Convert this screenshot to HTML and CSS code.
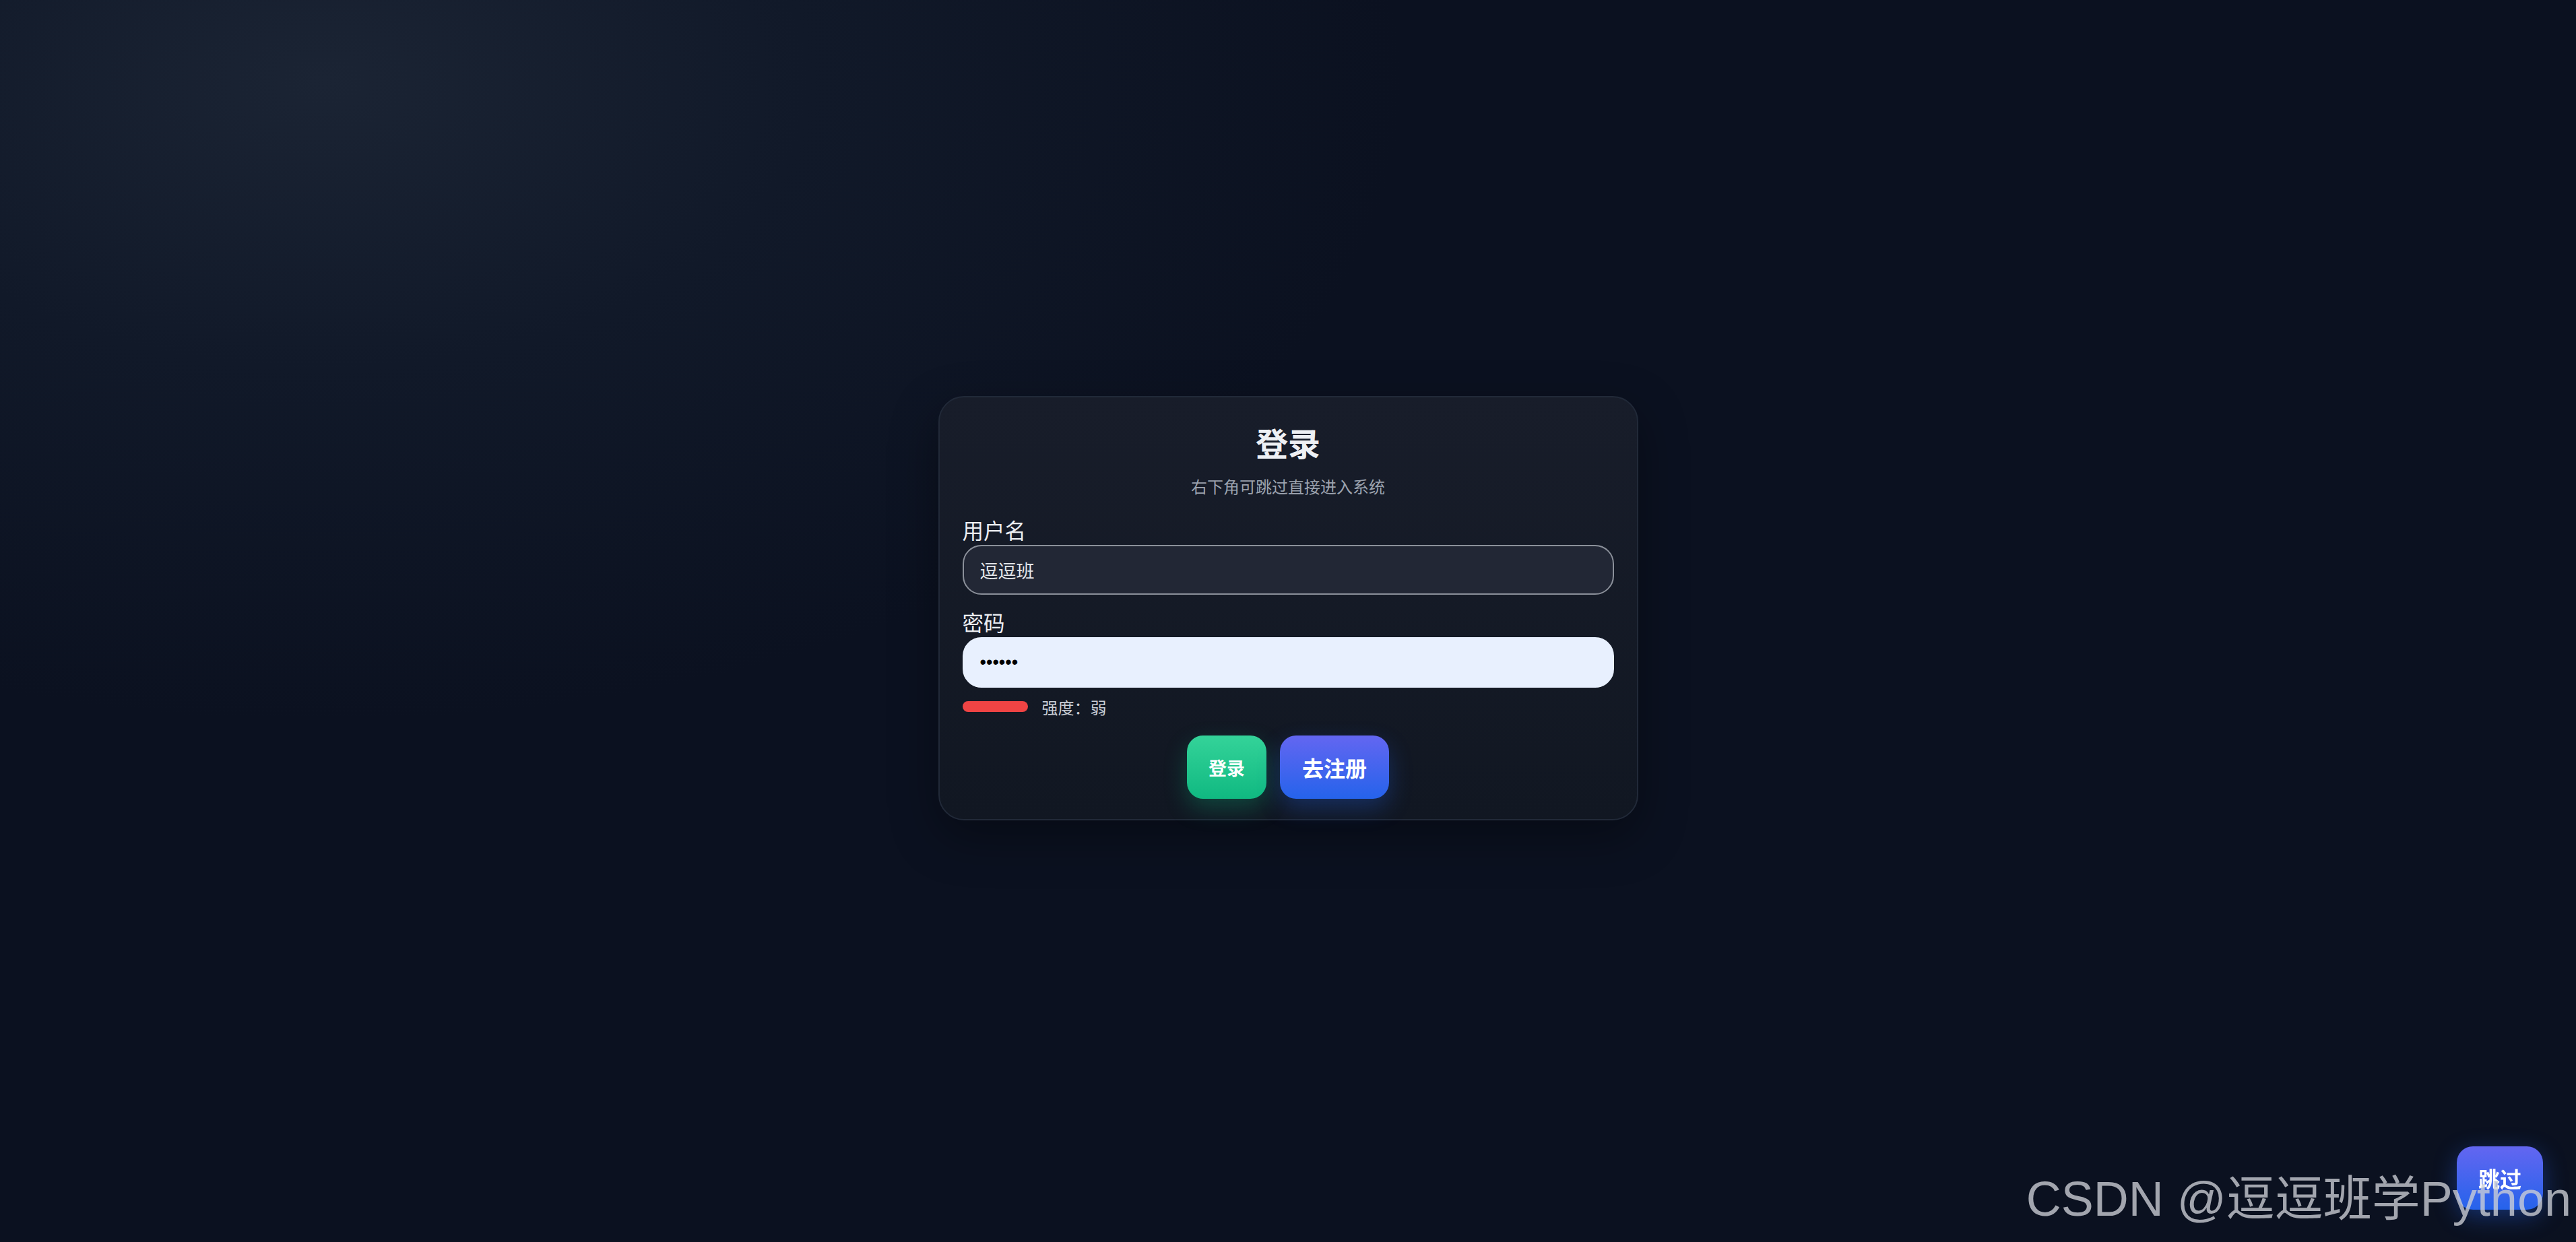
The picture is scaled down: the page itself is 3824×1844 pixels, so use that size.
FILE: index.html
```html
<!DOCTYPE html>
<html lang="zh-CN">
<head>
    <meta charset="UTF-8">
    <meta name="viewport" content="width=device-width, initial-scale=1.0">
    <title>登录</title>
    <link rel="stylesheet" href="styles.css">
</head>
<body>
    <div class="login-card">
        <h1 class="card-title">登录</h1>
        <p class="card-tip">右下角可跳过直接进入系统</p>

        <div class="field">
            <label for="username">用户名</label>
            <input type="text" id="username" class="text-input" value="逗逗班">
        </div>

        <div class="field">
            <label for="password">密码</label>
            <input type="password" id="password" class="text-input filled" value="123456">
        </div>

        <div class="strength">
            <span class="strength-bar"></span>
            <span class="strength-text">强度：弱</span>
        </div>

        <div class="actions">
            <button class="btn btn-login">登录</button>
            <button class="btn btn-register">去注册</button>
        </div>
    </div>

    <button class="skip-button">跳过</button>

    <div class="watermark">CSDN @逗逗班学Python</div>
</body>
</html>
```

FILE: styles.css
```css
* {
    box-sizing: border-box;
}
body {
    margin: 0;
    min-height: 100vh;
    padding-bottom: 38px;
    display: flex;
    justify-content: center;
    align-items: center;
    font-family: "Noto Sans CJK SC", "Noto Sans", sans-serif;
    background-color: #0b1120;
    background-image: radial-gradient(ellipse 1600px 950px at 480px 120px, #1b2434 0%, #111929 45%, #0b1120 100%);
    color: #e5e7eb;
}
.login-card {
    width: 1039px;
    padding: 30px 34px 30px;
    border: 2px solid #212938;
    border-radius: 38px;
    background: linear-gradient(180deg, #181d2a 0%, #111722 100%);
    box-shadow: 0 24px 70px rgba(0, 0, 0, 0.35);
}
.card-title {
    margin: 0;
    font-size: 48px;
    line-height: 72px;
    font-weight: 700;
    text-align: center;
    color: #eef0f4;
}
.card-tip {
    margin: 10px 0 0;
    font-size: 24px;
    line-height: 40px;
    text-align: center;
    color: #9ca3af;
}
.field {
    margin-top: 27px;
}
.field + .field {
    margin-top: 23px;
}
.field label {
    display: block;
    margin-bottom: 6px;
    font-size: 31.5px;
    line-height: 34px;
    color: #eceef2;
}
.text-input {
    display: block;
    width: 100%;
    height: 74px;
    padding: 0 24px;
    border: 2px solid #8b909a;
    border-radius: 28px;
    background: #222735;
    color: #e5e7eb;
    font-family: "Liberation Sans", "Noto Sans CJK SC", sans-serif;
    font-size: 27px;
    outline: none;
}
/* autofilled look of the password box */
.text-input.filled {
    height: 75px;
    border-color: #e8f0fe;
    background: #e8f0fe;
    color: #000;
}
.strength {
    margin-top: 13px;
    height: 30px;
    display: flex;
    align-items: center;
    gap: 21px;
}
.strength-bar {
    width: 97px;
    height: 16px;
    border-radius: 8px;
    background: #ef4444;
}
.strength-text {
    font-size: 24px;
    color: #c9ced6;
}
.actions {
    margin-top: 28px;
    display: flex;
    justify-content: center;
    gap: 20px;
}
.btn {
    height: 94px;
    padding: 0 32px;
    border: none;
    border-radius: 24px;
    color: #fff;
    font-family: "Noto Sans CJK SC", sans-serif;
    font-weight: 700;
    cursor: pointer;
}
.btn-login {
    width: 118px;
    font-size: 27px;
    background: linear-gradient(180deg, #34d399 0%, #10b981 100%);
    box-shadow: 0 14px 34px rgba(16, 185, 129, 0.28);
}
.btn-register {
    width: 162px;
    font-size: 32px;
    background: linear-gradient(180deg, #6366f1 0%, #2563eb 100%);
    box-shadow: 0 14px 34px rgba(37, 99, 235, 0.3);
}
.skip-button {
    position: fixed;
    right: 49px;
    bottom: 48px;
    width: 128px;
    height: 94px;
    border: none;
    border-radius: 24px;
    background: linear-gradient(180deg, #6366f1 0%, #2563eb 100%);
    box-shadow: 0 10px 34px rgba(37, 99, 235, 0.4);
    color: #fff;
    font-family: "Noto Sans CJK SC", sans-serif;
    font-size: 32px;
    font-weight: 700;
    cursor: pointer;
}
.watermark {
    position: fixed;
    right: 7px;
    bottom: 28px;
    font-family: "Liberation Sans", "Noto Sans CJK SC", sans-serif;
    font-size: 72px;
    line-height: 72px;
    color: rgba(205, 208, 214, 0.78);
    white-space: nowrap;
    pointer-events: none;
}
```
